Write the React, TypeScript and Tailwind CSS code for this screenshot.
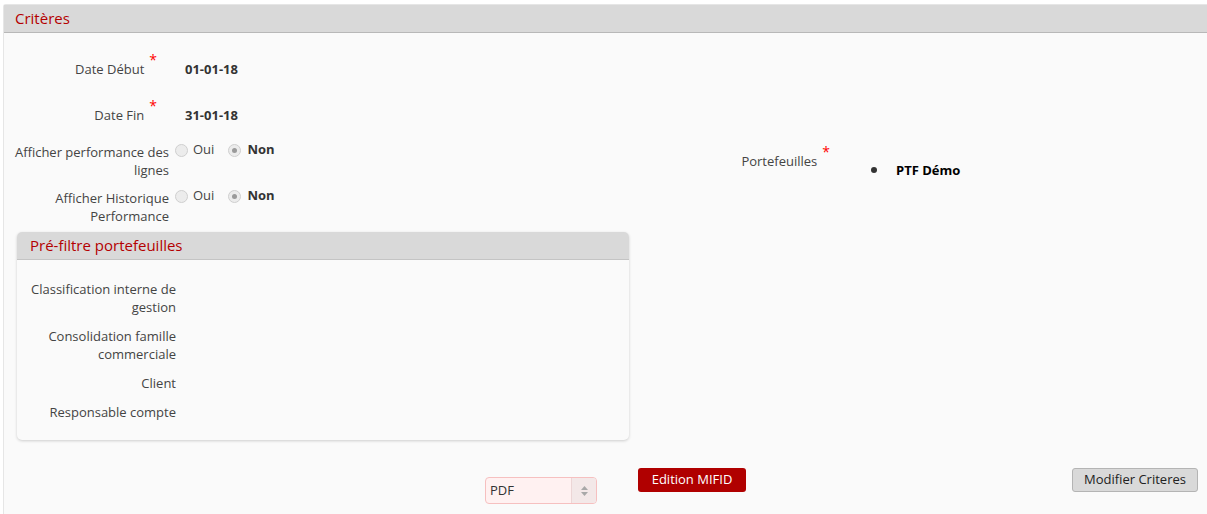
import type { ReactNode } from "react";

const Star = () => (
  <span className="relative -top-[9px] ml-[5px] text-[14px] leading-none text-[#f00]">*</span>
);

const Radio: React.FC<{ checked?: boolean }> = ({ checked }) => (
  <span className="inline-flex h-[13px] w-[13px] shrink-0 items-center justify-center rounded-full border border-[#cfcfcf] bg-[#ececec]">
    {checked ? <span className="h-[5px] w-[5px] rounded-full bg-[#9a9a9a]" /> : null}
  </span>
);

const RadioRow: React.FC<{ label: ReactNode }> = ({ label }) => (
  <div className="flex items-start">
    <div className="w-[165px] text-right leading-[18px]">{label}</div>
    <div className="ml-[6px] flex h-[14px] items-center">
      <Radio />
      <span className="ml-[5px]">Oui</span>
      <span className="ml-[14px] flex">
        <Radio checked />
      </span>
      <span className="ml-[6px] font-bold text-[#333]">Non</span>
    </div>
  </div>
);

const FilterRow: React.FC<{ children: ReactNode }> = ({ children }) => (
  <div className="w-[159px] text-right leading-[18px]">{children}</div>
);

export default function App() {
  return (
    <div
      className="h-[514px] w-[1207px] overflow-hidden bg-white pl-[3px] pt-[4px] text-[13px] text-[#444]"
      style={{ fontFamily: '"Open Sans", "Noto Sans", sans-serif' }}
    >
      <div className="h-[520px] w-[1220px] rounded-tl-[3px] border-l border-t border-[#e6e6e6] bg-[#fafafa]">
        <div className="flex h-[28px] items-center border-b border-[#b8b8b8] bg-[#d9d9d9] pl-[11px] text-[15px] font-medium text-[#b40000]">
          Critères
        </div>

        <div className="flex pt-[28px]">
          {/* left column */}
          <div className="w-[637px] shrink-0">
            <div className="flex h-[18px] items-center">
              <div className="w-[164px] pr-[11px] text-right">
                Date Début
                <Star />
              </div>
              <div className="ml-[17px] font-bold text-[#333]">01-01-18</div>
            </div>
            <div className="mt-[28px] flex h-[18px] items-center">
              <div className="w-[164px] pr-[11px] text-right">
                Date Fin
                <Star />
              </div>
              <div className="ml-[17px] font-bold text-[#333]">31-01-18</div>
            </div>

            <div className="mt-[18px] flex flex-col gap-[10px]">
              <RadioRow
                label={
                  <>
                    Afficher performance des
                    <br />
                    lignes
                  </>
                }
              />
              <RadioRow
                label={
                  <>
                    Afficher Historique
                    <br />
                    Performance
                  </>
                }
              />
            </div>

            <div className="ml-[13px] mt-[7px] w-[612px] overflow-hidden rounded-[5px] bg-[#fafafa] shadow-[0_1px_3px_rgba(0,0,0,0.18)]">
              <div className="flex h-[28px] items-center border-b border-[#c4c4c4] bg-[#d9d9d9] pl-[13px] text-[15px] font-medium text-[#b40000]">
                Pré-filtre portefeuilles
              </div>
              <div className="flex flex-col gap-[11px] pb-[19px] pt-[20px]">
                <FilterRow>
                  Classification interne de
                  <br />
                  gestion
                </FilterRow>
                <FilterRow>
                  Consolidation famille
                  <br />
                  commerciale
                </FilterRow>
                <FilterRow>Client</FilterRow>
                <FilterRow>Responsable compte</FilterRow>
              </div>
            </div>
          </div>

          {/* right column */}
          <div className="flex-1 pt-[91px]">
            <div className="flex items-start">
              <div className="w-[189px] text-right leading-[18px]">
                Portefeuilles
                <Star />
              </div>
              <ul className="ml-[41px] mt-[9px]">
                <li className="flex items-center">
                  <span className="h-[6px] w-[6px] rounded-full bg-[#333]" />
                  <span className="ml-[19px] font-bold leading-[18px] text-black">PTF Démo</span>
                </li>
              </ul>
            </div>
          </div>
        </div>

        <div className="flex items-start pt-[28px]">
          <div className="ml-[481px] mt-[9px] flex h-[27px] w-[112px] overflow-hidden rounded-[4px] border border-[#f6c0c0] bg-[#fff1f1]">
            <div className="flex flex-1 items-center pl-[4px] text-[#333]">PDF</div>
            <div className="flex w-[25px] flex-col items-center justify-center gap-[2px] border-l border-[#ecd6d6] bg-[#f3e8e8]">
              <svg width="7" height="4" viewBox="0 0 7 4">
                <path d="M0 4 L3.5 0 L7 4 Z" fill="#a8a8a8" />
              </svg>
              <svg width="7" height="4" viewBox="0 0 7 4">
                <path d="M0 0 L3.5 4 L7 0 Z" fill="#a8a8a8" />
              </svg>
            </div>
          </div>
          <button className="ml-[41px] h-[24px] w-[108px] rounded-[3px] bg-[#b00000] text-[13px] text-white">
            Edition MIFID
          </button>
          <button className="ml-[326px] h-[24px] w-[126px] rounded-[3px] border border-[#b4b4b4] bg-[#d9d9d9] text-[13px] text-[#222]">
            Modifier Criteres
          </button>
        </div>
      </div>
    </div>
  );
}
